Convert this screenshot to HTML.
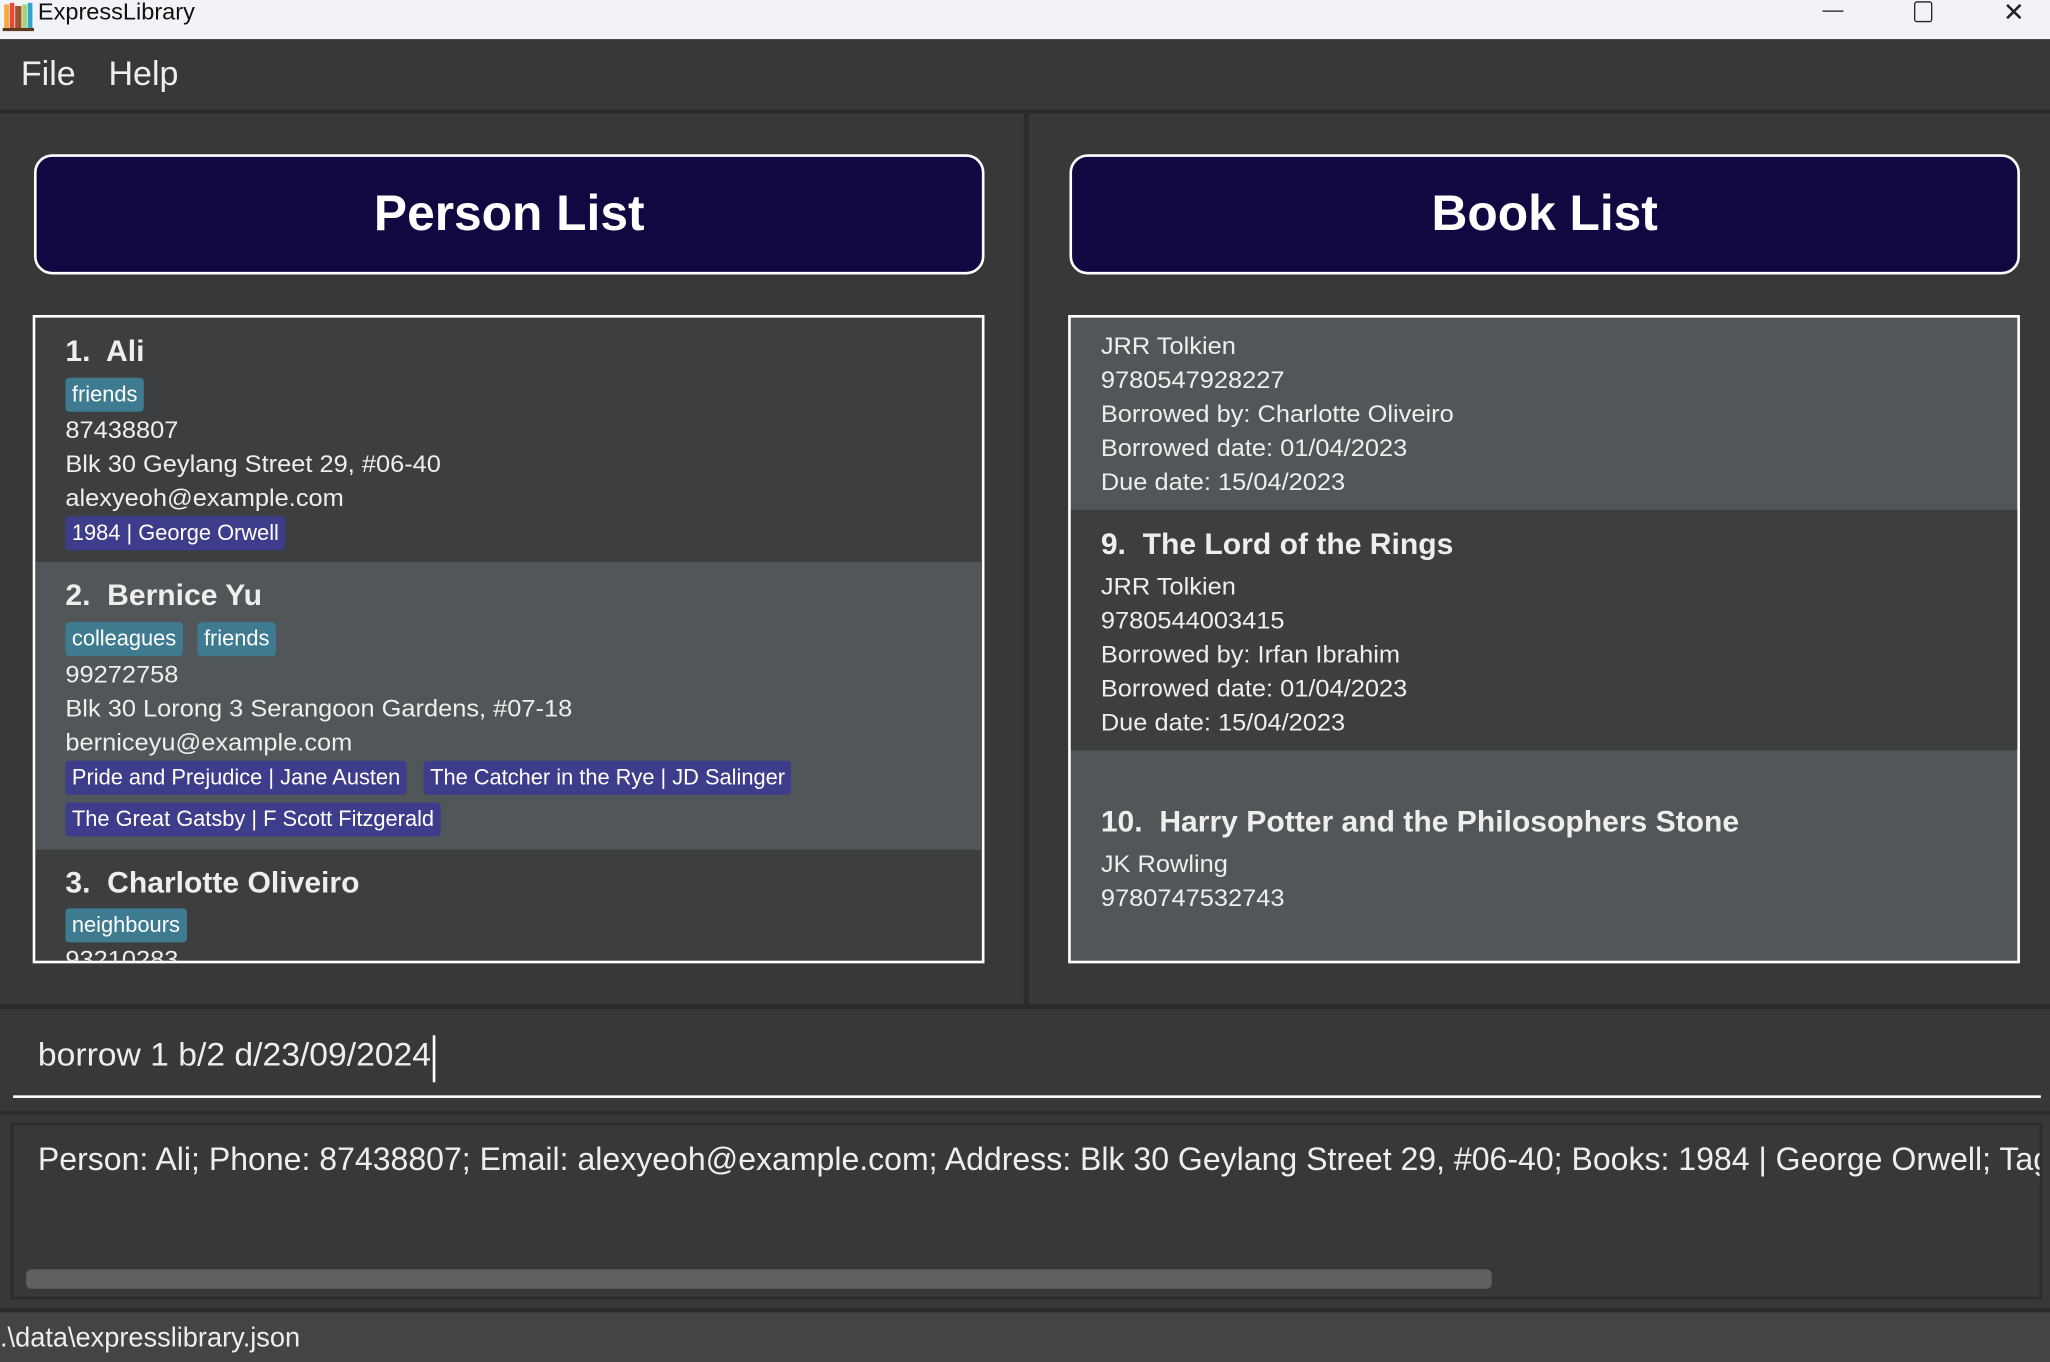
<!DOCTYPE html>
<html><head><meta charset="utf-8"><style>
html,body{margin:0;padding:0;width:2050px;height:1362px;overflow:hidden;background:#383838}
#w{position:absolute;left:0;top:0;width:1568px;height:1042px;transform-origin:0 0;transform:scale(1.30740,1.30710);font-family:"Liberation Sans",sans-serif;color:#eee}
.a{position:absolute;white-space:nowrap}
.t{font-size:18.5px;color:#eee;transform:scaleX(1.05);transform-origin:0 0}
.n{font-size:23px;color:#eee;font-weight:bold;transform:scaleX(1.0);transform-origin:0 0}
.tag{position:absolute;height:26px;line-height:26px;padding:0 5px;border-radius:3px;font-size:16.7px;color:#fff;background:#3e7b91;white-space:nowrap}
.bk{background:#3d3d8b}
.hdr{position:absolute;background:#110841;border:2px solid #fff;border-radius:14px;box-sizing:border-box;text-align:center;font-weight:bold;font-size:38px;color:#fff;line-height:88px}
</style></head><body><div id="w">
<div class="a" style="left:0;top:0;width:1568px;height:30px;background:#f2f3f7"></div>
<svg class="a" style="left:2px;top:1px" width="24" height="24" viewBox="0 0 20 20"><rect x="1" y="2" width="3" height="15" fill="#f4a93a"/><rect x="4.5" y="1" width="3" height="16" fill="#e64a3b"/><rect x="8" y="3" width="4" height="14" fill="#a0522d"/><rect x="12.5" y="2" width="3" height="15" fill="#a5d27a"/><rect x="16" y="1" width="3" height="16" fill="#2fa6c9"/><rect x="0" y="17" width="20" height="2" fill="#5b3a1e"/></svg>
<div class="a" style="left:29px;top:-1px;font-size:18px;color:#111">ExpressLibrary</div>
<div class="a" style="left:1394px;top:8px;width:16px;height:1px;background:#222"></div>
<div class="a" style="left:1464px;top:1px;width:12px;height:14px;border:1px solid #222;border-radius:2px"></div>
<div class="a" style="left:1532px;top:-3px;font-size:20px;color:#222">✕</div>
<div class="a" style="left:0;top:30px;width:1568px;height:54px;background:#383838"></div>
<div class="a" style="left:16px;top:41px;font-size:26px;color:#eee">File</div>
<div class="a" style="left:83px;top:41px;font-size:26px;color:#eee">Help</div>
<div class="a" style="left:0;top:84px;width:1568px;height:3px;background:#2b2b2b"></div>
<div class="a" style="left:783px;top:87px;width:4px;height:681px;background:#2b2b2b"></div>
<div class="hdr" style="left:26px;top:118px;width:727px;height:92px">Person List</div>
<div class="hdr" style="left:818px;top:118px;width:727px;height:92px">Book List</div>
<div class="a" style="left:25px;top:241px;width:728px;height:496px;border:2px solid #fff;box-sizing:border-box;overflow:hidden;background:#3c3e40">
 <div class="a" style="left:0;top:187px;width:728px;height:220px;background:#515658"></div>
</div>
<div class="a n" style="left:50px;top:255px">1.&nbsp; Ali</div>
<div class="tag" style="left:50px;top:289px">friends</div>
<div class="a t" style="left:50px;top:318px">87438807</div>
<div class="a t" style="left:50px;top:344px">Blk 30 Geylang Street 29, #06-40</div>
<div class="a t" style="left:50px;top:370px">alexyeoh@example.com</div>
<div class="tag bk" style="left:50px;top:395px">1984 | George Orwell</div>
<div class="a n" style="left:50px;top:442px">2.&nbsp; Bernice Yu</div>
<div class="tag" style="left:50px;top:476px">colleagues</div>
<div class="tag" style="left:151px;top:476px">friends</div>
<div class="a t" style="left:50px;top:505px">99272758</div>
<div class="a t" style="left:50px;top:531px">Blk 30 Lorong 3 Serangoon Gardens, #07-18</div>
<div class="a t" style="left:50px;top:557px">berniceyu@example.com</div>
<div class="tag bk" style="left:50px;top:582px">Pride and Prejudice | Jane Austen</div>
<div class="tag bk" style="left:324px;top:582px">The Catcher in the Rye | JD Salinger</div>
<div class="tag bk" style="left:50px;top:614px">The Great Gatsby | F Scott Fitzgerald</div>
<div class="a n" style="left:50px;top:662px">3.&nbsp; Charlotte Oliveiro</div>
<div class="tag" style="left:50px;top:695px">neighbours</div>
<div class="a" style="left:27px;top:723px;width:724px;height:12px;overflow:hidden"><div class="a t" style="left:23px;top:0">93210283</div></div>
<div class="a" style="left:817px;top:241px;width:728px;height:496px;border:2px solid #fff;box-sizing:border-box;overflow:hidden;background:#515658">
 <div class="a" style="left:0;top:147px;width:728px;height:184px;background:#3c3e40"></div>
</div>
<div class="a t" style="left:842px;top:254px">JRR Tolkien</div>
<div class="a t" style="left:842px;top:280px">9780547928227</div>
<div class="a t" style="left:842px;top:306px">Borrowed by: Charlotte Oliveiro</div>
<div class="a t" style="left:842px;top:332px">Borrowed date: 01/04/2023</div>
<div class="a t" style="left:842px;top:358px">Due date: 15/04/2023</div>
<div class="a n" style="left:842px;top:403px">9.&nbsp; The Lord of the Rings</div>
<div class="a t" style="left:842px;top:438px">JRR Tolkien</div>
<div class="a t" style="left:842px;top:464px">9780544003415</div>
<div class="a t" style="left:842px;top:490px">Borrowed by: Irfan Ibrahim</div>
<div class="a t" style="left:842px;top:516px">Borrowed date: 01/04/2023</div>
<div class="a t" style="left:842px;top:542px">Due date: 15/04/2023</div>
<div class="a n" style="left:842px;top:615px">10.&nbsp; Harry Potter and the Philosophers Stone</div>
<div class="a t" style="left:842px;top:650px">JK Rowling</div>
<div class="a t" style="left:842px;top:676px">9780747532743</div>
<div class="a" style="left:0;top:768px;width:1568px;height:4px;background:#2b2b2b"></div>
<div class="a" style="left:29px;top:793px;font-size:25px;color:#eee;transform:scaleX(1.03);transform-origin:0 0">borrow 1 b/2 d/23/09/2024</div>
<div class="a" style="left:331px;top:792px;width:1.5px;height:36px;background:#fff"></div>
<div class="a" style="left:10px;top:838px;width:1551px;height:2px;background:#fff"></div>
<div class="a" style="left:0;top:850px;width:1568px;height:3px;background:#2e2e2e"></div>
<div class="a" style="left:8px;top:859px;width:1554px;height:135px;border:2px solid #2c2c2c;box-sizing:border-box;overflow:hidden">
 <div class="a" style="left:19px;top:12px;font-size:25px;color:#eee;transform:scaleX(.98);transform-origin:0 0">Person: Ali; Phone: 87438807; Email: alexyeoh@example.com; Address: Blk 30 Geylang Street 29, #06-40; Books: 1984 | George Orwell; Tags: [friends]</div>
 <div class="a" style="left:10px;top:110px;width:1121px;height:15px;background:#606060;border-radius:4px"></div>
</div>
<div class="a" style="left:0;top:1001px;width:1568px;height:3px;background:#2b2b2b"></div>
<div class="a" style="left:0;top:1004px;width:1568px;height:38px;background:#444"></div>
<div class="a" style="left:0;top:1012px;font-size:21px;color:#eee;transform:scaleX(.99);transform-origin:0 0">.\data\expresslibrary.json</div>
</div></body></html>
